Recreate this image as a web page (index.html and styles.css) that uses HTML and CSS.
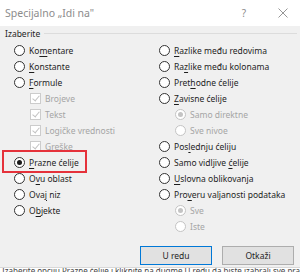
FILE: index.html
```html
<!DOCTYPE html>
<html lang="sr">
<head>
    <meta charset="UTF-8">
    <title>Specijalno „Idi na"</title>
    <link rel="stylesheet" href="styles.css">
</head>
<body>
    <div class="dialog">
        <div class="titlebar">
            <span class="title">Specijalno „Idi na"</span>
            <span class="title-btn help">?</span>
            <span class="title-btn close">
                <svg width="10" height="10" viewBox="0 0 10 10"><path d="M0.5 0.5 L9.5 9.5 M9.5 0.5 L0.5 9.5" stroke="#8a8a8a" stroke-width="0.9" fill="none"/></svg>
            </span>
        </div>

        <div class="content">
            <div class="legend"><span>Izaberite</span><div class="legend-line"></div></div>

            <div class="columns">
                <div class="col">
                    <div class="option"><span class="radio"></span><span>Ko<u>m</u>entare</span></div>
                    <div class="option"><span class="radio"></span><span><u>K</u>onstante</span></div>
                    <div class="option"><span class="radio"></span><span><u>F</u>ormule</span></div>
                    <div class="option sub disabled"><span class="check"></span><span>Brojeve</span></div>
                    <div class="option sub disabled"><span class="check"></span><span>Tekst</span></div>
                    <div class="option sub disabled"><span class="check"></span><span>Logičke vrednosti</span></div>
                    <div class="option sub disabled"><span class="check"></span><span>Greške</span></div>
                    <div class="option marked"><span class="radio on"></span><span><u>P</u>razne ćelije</span><span class="highlight"></span></div>
                    <div class="option"><span class="radio"></span><span>O<u>v</u>u oblast</span></div>
                    <div class="option"><span class="radio"></span><span>Ova<u>j</u> niz</span></div>
                    <div class="option"><span class="radio"></span><span>O<u>b</u>jekte</span></div>
                </div>
                <div class="col right">
                    <div class="option"><span class="radio"></span><span><u>R</u>azlike među redovima</span></div>
                    <div class="option"><span class="radio"></span><span>Ra<u>z</u>like među kolonama</span></div>
                    <div class="option"><span class="radio"></span><span>Pret<u>h</u>odne ćelije</span></div>
                    <div class="option"><span class="radio"></span><span><u>Z</u>avisne ćelije</span></div>
                    <div class="option sub disabled"><span class="radio on"></span><span>Samo direktne</span></div>
                    <div class="option sub disabled"><span class="radio"></span><span>Sve nivoe</span></div>
                    <div class="option"><span class="radio"></span><span>Pos<u>l</u>ednju ćeliju</span></div>
                    <div class="option"><span class="radio"></span><span>Samo vidljive <u>ć</u>elije</span></div>
                    <div class="option"><span class="radio"></span><span><u>U</u>slovna oblikovanja</span></div>
                    <div class="option"><span class="radio"></span><span>Pro<u>v</u>eru valjanosti podataka</span></div>
                    <div class="option sub disabled"><span class="radio on"></span><span>Sve</span></div>
                    <div class="option sub disabled"><span class="radio"></span><span>Iste</span></div>
                </div>
            </div>

            <div class="buttons">
                <button class="btn default">U redu</button>
                <button class="btn">Otkaži</button>
            </div>
        </div>
    </div>
    <div class="behind">
        <p>Izaberite opciju Prazne ćelije i kliknite na dugme U redu da biste izabrali sve prazne ćelije u opsegu.</p>
    </div>
</body>
</html>
```

FILE: styles.css
```css
body {
    margin: 0;
    width: 300px;
    height: 272px;
    overflow: hidden;
    background: #f0f0f0;
    font-family: 'Noto Sans', 'DejaVu Sans', sans-serif;
    font-size: 8.5px;
    color: #1e1e1e;
}

.dialog {
    height: 267px;
    background: #f0f0f0;
}

.titlebar {
    height: 26px;
    background: #ffffff;
    display: flex;
    align-items: center;
}

.title {
    flex: 1;
    padding-left: 5px;
    font-size: 10.5px;
    color: #8c8c8c;
}

.title-btn {
    color: #8c8c8c;
    font-size: 10px;
    display: flex;
    align-items: center;
    justify-content: center;
}

.help {
    width: 12px;
    margin-right: 27px;
}

.close {
    width: 12px;
    margin-right: 11px;
}

.content {
    padding: 0 3px 0 5px;
}

.legend {
    height: 14px;
    display: flex;
    align-items: center;
    gap: 4px;
}

.legend-line {
    flex: 1;
    height: 1px;
    background: #dcdcdc;
}

.columns {
    display: grid;
    grid-template-columns: 145px 1fr;
    padding-top: 2px;
}

.col {
    padding-left: 9px;
}

.option {
    height: 16px;
    display: flex;
    align-items: center;
    gap: 4px;
    white-space: nowrap;
}

.option u {
    text-decoration-thickness: 1px;
    text-underline-offset: 1.5px;
}

.option.sub {
    padding-left: 16px;
}

.option.disabled {
    color: #a5a5a5;
}

.radio {
    width: 9px;
    height: 9px;
    border: 1px solid #333333;
    border-radius: 50%;
    background: #ffffff;
    flex-shrink: 0;
    display: flex;
    align-items: center;
    justify-content: center;
}

.radio.on::after {
    content: "";
    width: 5px;
    height: 5px;
    border-radius: 50%;
    background: #1a1a1a;
}

.disabled .radio {
    border-color: #c4c4c4;
}

.disabled .radio.on::after {
    background: #c4c4c4;
}

.check {
    width: 9px;
    height: 9px;
    border: 1px solid #cccccc;
    background: #ffffff;
    flex-shrink: 0;
    position: relative;
}

.check::after {
    content: "";
    position: absolute;
    left: 3px;
    top: 0;
    width: 3px;
    height: 6px;
    border-right: 1px solid #c2c2c2;
    border-bottom: 1px solid #c2c2c2;
    transform: rotate(40deg);
}

.option.marked {
    position: relative;
}

.highlight {
    position: absolute;
    left: -12px;
    top: -4px;
    width: 81px;
    height: 19px;
    border: 2px solid #e5323b;
}

.buttons {
    display: flex;
    justify-content: flex-end;
    gap: 10px;
    padding-top: 12px;
    padding-right: 3px;
}

.btn {
    width: 72px;
    height: 19px;
    background: #e1e1e1;
    border: 1px solid #adadad;
    font-family: inherit;
    font-size: 8.5px;
    color: #1e1e1e;
    padding: 0;
}

.btn.default {
    border-color: #0078d7;
}

.behind {
    height: 5px;
    overflow: hidden;
    background: #ffffff;
    border-top: 1px solid #d8d8d8;
}

.behind p {
    margin: -2px 0 0 2px;
    font-size: 8px;
    line-height: 10px;
    color: #444444;
    white-space: nowrap;
}
```
